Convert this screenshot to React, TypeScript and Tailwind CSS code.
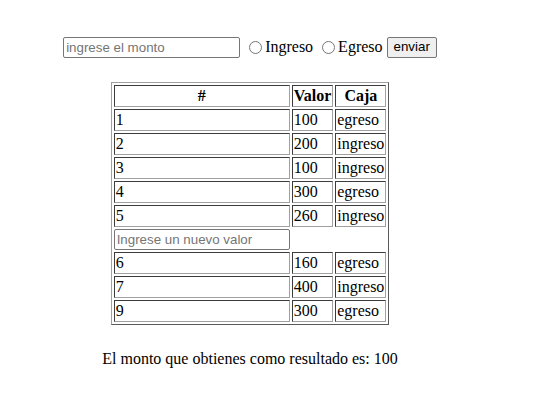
import React from "react";

const rows = [
  { id: "1", valor: "100", caja: "egreso" },
  { id: "2", valor: "200", caja: "ingreso" },
  { id: "3", valor: "100", caja: "ingreso" },
  { id: "4", valor: "300", caja: "egreso" },
  { id: "5", valor: "260", caja: "ingreso" },
];

const rows2 = [
  { id: "6", valor: "160", caja: "egreso" },
  { id: "7", valor: "400", caja: "ingreso" },
  { id: "9", valor: "300", caja: "egreso" },
];

const cell =
  "border border-t-[#3c3c3c] border-l-[#3c3c3c] border-b-[#a0a0a0] border-r-[#a0a0a0] p-px h-[22px] leading-[18px] text-left";

function Row({ r }: { r: { id: string; valor: string; caja: string } }) {
  return (
    <tr>
      <td className={cell}>{r.id}</td>
      <td className={cell}>{r.valor}</td>
      <td className={cell}>{r.caja}</td>
    </tr>
  );
}

export default function App() {
  return (
    <div className="w-[500px] px-2 pt-[35px] font-['Liberation_Serif',serif] text-base text-black">
      <form
        className="flex items-center justify-center"
        onSubmit={(e) => {
          e.preventDefault();
        }}
      >
        <input
          type="text"
          placeholder="ingrese el monto"
          className="w-[177px] h-[21px] border border-[#767676] rounded-[2px] px-[2px] py-px font-['Liberation_Sans',sans-serif] text-[13.33px] placeholder:text-[#757575] outline-none"
        />
        <label className="flex items-center ml-[6px]">
          <input type="radio" name="caja" className="w-[13px] h-[13px] mx-[3px] accent-gray-500" />
          <span>Ingreso</span>
        </label>
        <label className="flex items-center ml-[6px]">
          <input type="radio" name="caja" className="w-[13px] h-[13px] mx-[3px] accent-gray-500" />
          <span>Egreso</span>
        </label>
        <button
          type="submit"
          className="ml-[4px] h-[21px] px-[6px] border border-[#767676] rounded-[2px] bg-[#efefef] font-['Liberation_Sans',sans-serif] text-[13.33px] leading-none"
        >
          enviar
        </button>
      </form>

      <table className="mx-auto mt-[23px] border-separate border-spacing-[2px] border border-t-[#a0a0a0] border-l-[#a0a0a0] border-b-[#5a5a5a] border-r-[#5a5a5a]">
        <thead>
          <tr>
            <th className={cell + " w-[176px] !text-center font-bold"}>#</th>
            <th className={cell + " font-bold"}>Valor</th>
            <th className={cell + " !text-center font-bold"}>Caja</th>
          </tr>
        </thead>
        <tbody>
          {rows.map((r) => (
            <Row key={r.id} r={r} />
          ))}
          <tr>
            <td className="p-0">
              <input
                type="text"
                placeholder="Ingrese un nuevo valor"
                className="block w-[176px] h-[21px] border border-[#767676] rounded-[2px] px-[2px] py-px font-['Liberation_Sans',sans-serif] text-[13.33px] placeholder:text-[#757575] outline-none"
              />
            </td>
          </tr>
          {rows2.map((r) => (
            <Row key={r.id} r={r} />
          ))}
        </tbody>
      </table>

      <p className="mt-[22px] text-center">El monto que obtienes como resultado es: 100</p>
    </div>
  );
}
